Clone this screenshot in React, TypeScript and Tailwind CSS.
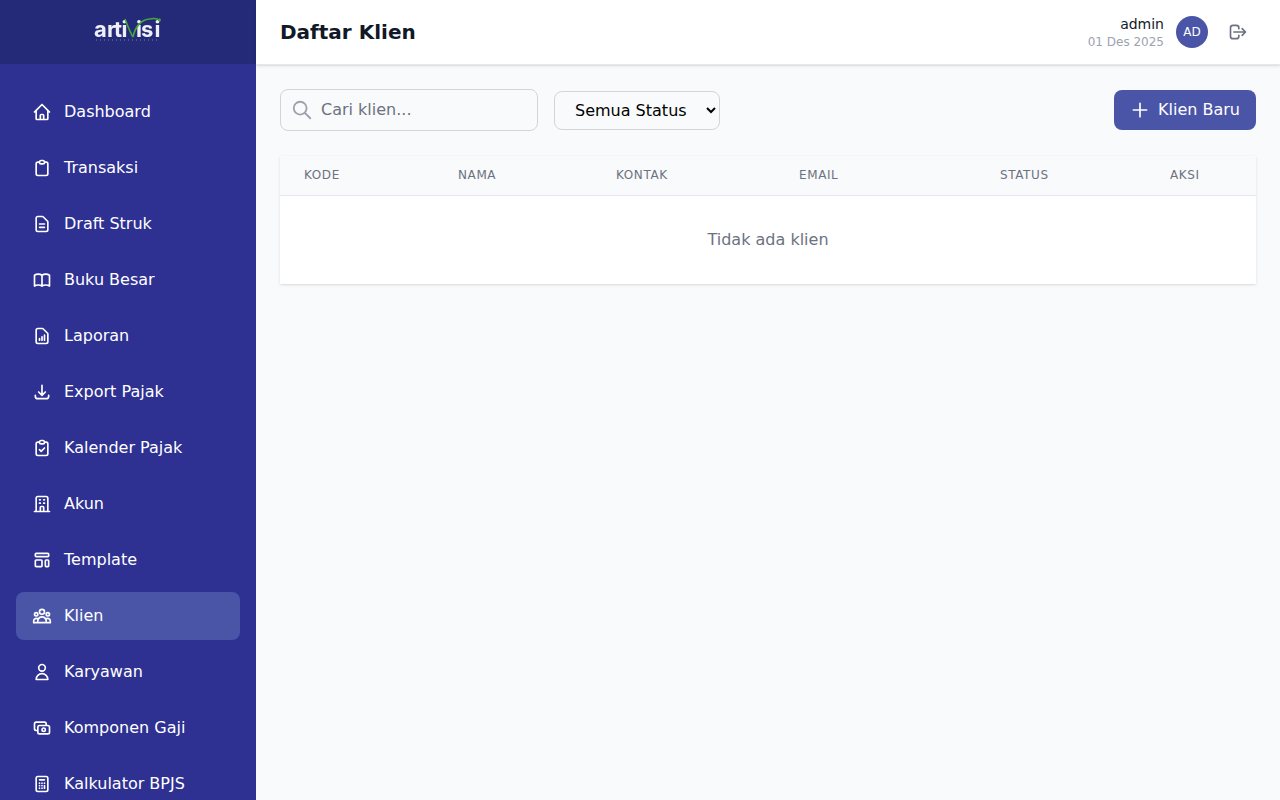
import React from "react";
import {
  HiOutlineHome,
  HiOutlineClipboard,
  HiOutlineDocumentText,
  HiOutlineBookOpen,
  HiOutlineDocumentReport,
  HiOutlineDownload,
  HiOutlineClipboardCheck,
  HiOutlineOfficeBuilding,
  HiOutlineTemplate,
  HiOutlineUserGroup,
  HiOutlineUser,
  HiOutlineCash,
  HiOutlineCalculator,
  HiOutlineLogout,
  HiOutlineSearch,
  HiOutlinePlus,
} from "react-icons/hi";

const nav = [
  ["Dashboard", HiOutlineHome],
  ["Transaksi", HiOutlineClipboard],
  ["Draft Struk", HiOutlineDocumentText],
  ["Buku Besar", HiOutlineBookOpen],
  ["Laporan", HiOutlineDocumentReport],
  ["Export Pajak", HiOutlineDownload],
  ["Kalender Pajak", HiOutlineClipboardCheck],
  ["Akun", HiOutlineOfficeBuilding],
  ["Template", HiOutlineTemplate],
  ["Klien", HiOutlineUserGroup],
  ["Karyawan", HiOutlineUser],
  ["Komponen Gaji", HiOutlineCash],
  ["Kalkulator BPJS", HiOutlineCalculator],
] as const;

const cols = [
  ["KODE", "w-[154px]"],
  ["NAMA", "w-[158px]"],
  ["KONTAK", "w-[183px]"],
  ["EMAIL", "w-[201px]"],
  ["STATUS", "w-[170px]"],
  ["AKSI", "w-[110px]"],
];

function Logo() {
  return (
    <svg width="68" height="28" viewBox="0 0 68 28" className="block blur-[0.3px]">
      <text x="0 13 20 27.5" y="22" fontFamily="Inter, sans-serif" fontSize="22" fontWeight="700" fill="#eef0f8">arti</text>
      <text x="42 47 60.5" y="22" fontFamily="Inter, sans-serif" fontSize="22" fontWeight="700" fill="#eef0f8">isi</text>
      <path d="M31 4 C33 9 36 17 39 22" stroke="#46a83a" strokeWidth="1.6" fill="none" />
      <path d="M39 22 C41 12 47 5 55 4 C60 3 64 3 66 6" stroke="#46a83a" strokeWidth="1.6" fill="none" />
      <circle cx="65.5" cy="5" r="1.4" fill="#46a83a" />
      <path d="M2 25 H66" stroke="#8f93c4" strokeWidth="1" strokeDasharray="1 3" opacity="0.8" />
    </svg>
  );
}

export default function App() {
  return (
    <div className="flex h-screen overflow-hidden bg-[#f9fafb] font-['DejaVu_Sans',sans-serif]">
      <aside className="flex w-64 shrink-0 flex-col overflow-hidden bg-[#2e3192] text-white">
        <div className="flex h-16 shrink-0 items-start justify-center bg-[#252a78] pt-[15px]">
          <Logo />
        </div>
        <nav className="flex flex-col gap-2 px-4 pt-6">
          {nav.map(([label, Icon]) => (
            <div
              key={label}
              className={`flex h-12 shrink-0 items-center gap-3 rounded-lg px-4 text-base ${label === "Klien" ? "bg-[#4a55a8]" : ""}`}
            >
              <Icon className="h-5 w-5 shrink-0 text-white" />
              <span>{label}</span>
            </div>
          ))}
        </nav>
      </aside>
      <div className="flex min-w-0 flex-1 flex-col">
        <header className="flex h-[65px] shrink-0 items-center justify-between border-b border-[#e5e7eb] bg-white px-6 shadow-sm">
          <h1 className="text-xl font-bold text-[#111827]">Daftar Klien</h1>
          <div className="flex items-center gap-3">
            <div className="pt-0.5 text-right">
              <div className="text-sm leading-4 text-[#111827]">admin</div>
              <div className="mt-0.5 text-xs leading-4 text-[#9ca3af]">01 Des 2025</div>
            </div>
            <div className="flex h-8 w-8 items-center justify-center rounded-full bg-[#4a55a8] text-xs text-white">AD</div>
            <button className="flex h-9 w-9 items-center justify-center text-[#6b7280]">
              <HiOutlineLogout className="h-5 w-5" />
            </button>
          </div>
        </header>
        <main className="flex-1 p-6">
          <div className="flex items-center justify-between">
            <div className="flex items-center gap-4">
              <div className="flex h-[42px] w-[258px] items-center gap-2 rounded-lg border border-[#d1d5db] px-3">
                <HiOutlineSearch className="-ml-0.5 h-[22px] w-[22px] shrink-0 text-[#9ca3af]" />
                <input placeholder="Cari klien..." className="w-full bg-transparent text-base outline-none placeholder:text-[#6b7280]" />
              </div>
              <select className="h-[39px] w-[166px] rounded-lg border border-[#d1d5db] bg-transparent px-4 text-base text-black">
                <option>Semua Status</option>
              </select>
            </div>
            <button className="flex h-10 w-[142px] items-center justify-center gap-2 rounded-lg bg-[#4a55a8] text-base text-white">
              <HiOutlinePlus className="h-5 w-5" />
              Klien Baru
            </button>
          </div>
          <div className="mt-[25px] overflow-hidden bg-white shadow">
            <table className="w-full table-fixed border-collapse">
              <thead className="bg-[#f9fafb]">
                <tr className="h-[39px] border-b border-[#e5e7eb]">
                  {cols.map(([c, w]) => (
                    <th key={c} className={`${w} px-6 text-left text-xs font-medium tracking-wider text-[#6b7280]`}>{c}</th>
                  ))}
                </tr>
              </thead>
              <tbody>
                <tr>
                  <td colSpan={6} className="h-[89px] text-center text-base text-[#6b7280]">Tidak ada klien</td>
                </tr>
              </tbody>
            </table>
          </div>
        </main>
      </div>
    </div>
  );
}
